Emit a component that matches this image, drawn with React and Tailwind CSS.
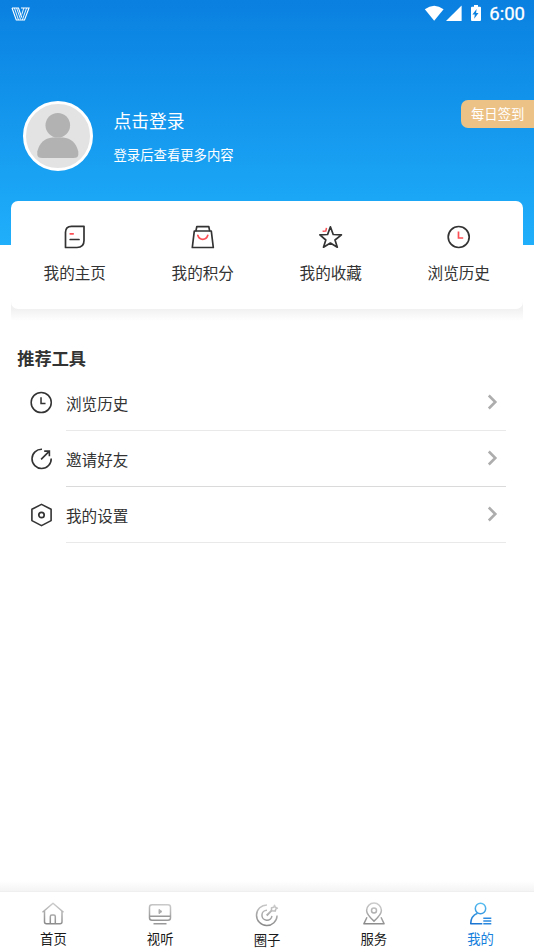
const FONT = "font-['Noto_Sans_CJK_SC','Noto_Sans',sans-serif]";

const StatusBar = () => (
  <div className="flex h-[27px] items-center justify-between pl-[11px] pr-[9px] text-white">
    <svg width="19" height="14" viewBox="0 0 19 14" fill="none" stroke="currentColor" strokeWidth="1.100">
      <path d="M1 1h6.500l3.200 9.500M10 1h8L13.500 13H5.300L1 1" />
      <path d="M3.400 1l4.100 12M5.600 1l4 11.500M15.600 1l-4.300 12M12.800 1l-2 6.500" strokeWidth=".9" />
    </svg>
    <div className="flex items-center">
      <svg width="59" height="18" viewBox="0 0 59 18" fill="currentColor">
        <path d="M.8 4.200Q10.200-2.800 19.600 4.200L10.200 15.700z" />
        <path d="M37.600.6V16H22z" />
        <path
          fillRule="evenodd"
          d="M50 0h4v1.700h2q1 0 1 1V15q0 1-1 1h-8q-1 0-1-1V2.700q0-1 1-1H50zM52.600 4.100l-4.200 5.400h2.400l-.6 4.200 4.300-5.600h-2.400z"
        />
      </svg>
      <span className="ml-[6px] font-[Roboto,sans-serif] text-[18.500px] leading-[20px] [-webkit-text-stroke:0.3px_white]">6:00</span>
    </div>
  </div>
);

const HomepageIcon = () => (
  <svg width="24" height="24" viewBox="0 0 24 24" fill="none" stroke="#333" strokeWidth="1.700" strokeLinecap="round" strokeLinejoin="round">
    <path d="M8.500 1.300H21V15.500Q21 22.500 14 22.500H2.500V7.300Q2.500 1.300 8.500 1.300z" />
    <path d="M7.200 14.500H16" />
    <path stroke="#fc5056" d="M7.200 8.800h3" />
  </svg>
);

const PointsIcon = () => (
  <svg width="24" height="24" viewBox="0 0 24 24" fill="none" stroke="#333" strokeWidth="1.700" strokeLinecap="round" strokeLinejoin="round">
    <path d="M3.300 6h17l2 16.500H1.300z" />
    <path d="M5 5.700l.8-4h12l.8 4" />
    <path stroke="#fc5056" d="M6.800 10.300q1.200 4 5 4t5-4" />
  </svg>
);

const FavoriteIcon = () => (
  <svg width="24" height="24" viewBox="0.600 0 24 24" fill="none" stroke="#333" strokeWidth="1.700" strokeLinejoin="round">
    <path d="M12 1.800l2.800 7.700 8.200.4-6.400 5.100 2.300 7.200L12 18l-6.900 4.200L7.400 15 1.500 9.900l7.700-.4z" />
    <path stroke="#fc5056" strokeWidth="1.500" d="M4.200 6.300l3.200-.3.700-3.100" />
  </svg>
);

const ClockIcon = ({ size = 24, width = 1.7, hand = '#333' }) => (
  <svg width={size} height={size} viewBox="0.300 0 24 24" fill="none" stroke="#333" strokeWidth={width}>
    <circle cx="12" cy="12" r="10.500" />
    <path stroke={hand} d="M11.800 6.500v6.500h4.700" />
  </svg>
);

const InviteIcon = () => (
  <svg width="24" height="24" viewBox="0 0 24 24" fill="none" stroke="#333" strokeWidth="1.600">
    <path d="M12 2.300A9.600 9.600 0 1 0 21.200 11.500" />
    <path d="M11.100 12.400L19.100 4.400M14.200 4.100h5.200v5.200" />
  </svg>
);

const SettingsIcon = () => (
  <svg width="24" height="24" viewBox="0 0 24 24" fill="none" stroke="#333" strokeWidth="1.600" strokeLinejoin="round">
    <path d="M11.500 1.400l9.600 4.900v11.300l-9.600 5-9.600-5V6.300z" />
    <circle cx="11.500" cy="12" r="2.700" strokeWidth="1.700" />
  </svg>
);

const TabSvg = ({ id, from, to, children }) => (
  <svg width="24" height="24" viewBox="0 0 24 24" fill="none" stroke={`url(#${id})`} strokeWidth="1.500" strokeLinejoin="round">
    <defs>
      <linearGradient id={id} gradientUnits="userSpaceOnUse" x1="14" y1="0" x2="10" y2="24">
        <stop stopColor={from} />
        <stop offset="1" stopColor={to} />
      </linearGradient>
    </defs>
    {children}
  </svg>
);

const GRAY = { from: '#d0d0d0', to: '#858585' };

const tabs = [
  {
    label: '首页',
    icon: (
      <TabSvg id="tab-home" {...GRAY}>
        <path d="M1.500 10.300L12 1.200l10.500 9.100" />
        <path d="M3.500 9v10.700q0 2 2 2h13.500q2 0 2-2V9" />
        <path d="M9.300 21.500v-7q0-1.500 1.500-1.500h2q1.500 0 1.500 1.500v7" />
      </TabSvg>
    ),
  },
  {
    label: '视听',
    icon: (
      <TabSvg id="tab-video" {...GRAY}>
        <rect x="1.500" y="2.800" width="21" height="15.400" rx="2.500" />
        <path d="M1.500 14.300h21M5.500 21.800h13" stroke="#999" />
        <path d="M11 7.300l3 2.200-3 2.200z" fill="#aaa" strokeWidth="1" />
      </TabSvg>
    ),
  },
  {
    label: '圈子',
    lower: true,
    icon: (
      <TabSvg id="tab-circle" {...GRAY}>
        <path d="M12 1.900A10.300 10.300 0 1 0 22.100 12.500" />
        <path d="M12 7.300a5 5 0 1 0 4.900 5.500" />
        <path d="M11.700 12.500L16.500 7.700" strokeWidth="1.900" />
        <path d="M16.500 7.700V4.800l2.300-.5.700-2 .9 2 2 .9-1.700.9-.4 2z" />
      </TabSvg>
    ),
  },
  {
    label: '服务',
    icon: (
      <TabSvg id="tab-service" {...GRAY}>
        <path d="M12 19.100Q4.600 12.300 4.600 8.400a7.400 7.400 0 0 1 14.800 0Q19.400 12.300 12 19.100z" />
        <circle cx="12" cy="8.500" r="2.500" />
        <path d="M5 15.200L1.900 21.800h20.200L19 15.200" />
      </TabSvg>
    ),
  },
  {
    label: '我的',
    active: true,
    icon: (
      <TabSvg id="tab-mine" from="#5cc2f2" to="#1670d0">
        <circle cx="11.500" cy="6.500" r="5.200" />
        <path d="M8.500 11.300Q1.700 14 1.700 21.800H13.300" />
        <path d="M14.300 16.300h8M14.300 19h8M14.300 21.800h8" stroke="#2b8ae0" />
      </TabSvg>
    ),
  },
];

const shortcuts = [
  { label: '我的主页', icon: <HomepageIcon /> },
  { label: '我的积分', icon: <PointsIcon /> },
  { label: '我的收藏', icon: <FavoriteIcon /> },
  { label: '浏览历史', icon: <ClockIcon hand="#fc5056" /> },
];

const tools = [
  { label: '浏览历史', icon: <ClockIcon size={23} width={1.6} />, line: 'border-[#e9e9e9]' },
  { label: '邀请好友', icon: <InviteIcon />, line: 'border-[#dadada]' },
  { label: '我的设置', icon: <SettingsIcon />, line: 'border-[#e9e9e9]' },
];

const App = () => {
  return (
    <div className={`flex h-[950px] w-[534px] flex-col overflow-hidden bg-white ${FONT}`}>
      <header className="h-[245px] shrink-0 bg-linear-to-b from-[#0a80e0] to-[#20affb]">
        <StatusBar />
        <div className="flex pl-[23px] pt-[74px] text-white">
          <div className="h-[70px] w-[70px] overflow-hidden rounded-full border-[3px] border-white bg-[#e3e3e3]">
            <svg width="64" height="64" viewBox="0 0 64 64" fill="#b2b2b2">
              <circle cx="31.800" cy="21.300" r="12.300" />
              <path d="M26.500 33.500h10.600Q49 34.500 52.300 47.500v3q0 3.500-5 3.500h-31q-5 0-5-3.500v-3Q14.500 34.500 26.500 33.500z" />
            </svg>
          </div>
          <div className="ml-[20.500px] flex-1 pt-[7px]">
            <p className="text-[17.800px] leading-[24px]">点击登录</p>
            <p className="mt-[13px] text-[13.350px] leading-[20px]">登录后查看更多内容</p>
          </div>
          <button className="-mt-px h-[28px] w-[73px] rounded-l-[7px] bg-[#edc286] pl-[10px] text-left text-[13.350px] leading-[28px]">
            每日签到
          </button>
        </div>
      </header>

      <section className="z-10 mx-[11px] -mt-[44px] shrink-0">
        <div className="bg-linear-to-b from-transparent from-90% to-[#f1f1f1] to-95%">
          <div className="grid h-[108px] grid-cols-4 rounded-[7px] bg-white pt-[24px]">
            {shortcuts.map((item) => (
              <div key={item.label} className="flex flex-col items-center pr-[0.500px]">
                {item.icon}
                <span className="mt-[11px] text-[15.600px] leading-[24px] text-[#333]">{item.label}</span>
              </div>
            ))}
          </div>
        </div>
        <div className="h-[12px] bg-linear-to-b from-[#f1f1f1] to-white" />
      </section>

      <main className="flex-1 pt-[23px]">
        <h2 className="pl-[17.300px] text-[17.200px] font-bold leading-[28px] text-[#333]">推荐工具</h2>
        <ul className="mt-[3px]">
          {tools.map((tool) => (
            <li key={tool.label} className="flex h-[56px]">
              <span className="flex w-[66px] items-center justify-center pb-px pl-[17px]">{tool.icon}</span>
              <div className={`mr-[28px] flex flex-1 items-center justify-between border-b pb-px pr-[8px] ${tool.line}`}>
                <span className="pt-px text-[15.600px] leading-[24px] text-[#333]">{tool.label}</span>
                <svg width="11" height="16" viewBox="0 0 11 16" fill="none" stroke="#adadad" strokeWidth="2.600">
                  <path d="M1.800 1.500L8.300 8l-6.500 6.500" />
                </svg>
              </div>
            </li>
          ))}
        </ul>
      </main>

      <div className="h-[10px] shrink-0 bg-linear-to-b from-white to-[#f4f4f4]" />
      <nav className="grid h-[59px] shrink-0 grid-cols-5 border-t border-[#efefef] bg-white pt-[10px]">
        {tabs.map((tab) => (
          <div
            key={tab.label}
            className={`flex flex-col items-center ${tab.active ? 'text-[#1680dc]' : 'text-[#1a1a1a]'} ${tab.lower ? 'pt-px' : ''}`}
          >
            {tab.icon}
            <span className="mt-[3px] text-[13.350px] leading-[20px]">{tab.label}</span>
          </div>
        ))}
      </nav>
    </div>
  );
};

export default App;
